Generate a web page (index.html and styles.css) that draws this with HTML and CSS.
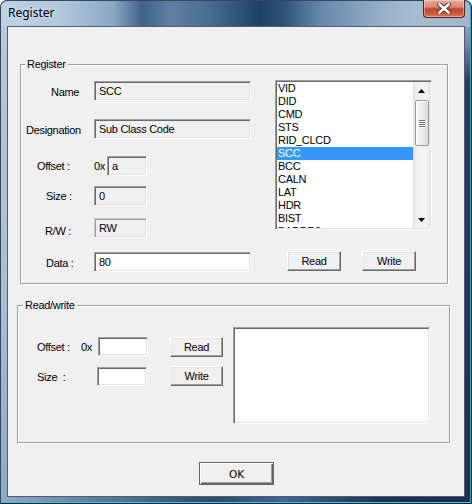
FILE: index.html
```html
<!DOCTYPE html>
<html>
<head>
<meta charset="utf-8">
<link rel="stylesheet" href="styles.css">
</head>
<body>
<div class="window">
  <div class="titlebar">
    <span class="title">Register</span>
    <div class="close">
      <svg width="14" height="11" viewBox="0 0 14 11">
        <path d="M2.5 1.5 L11.5 9.5 M11.5 1.5 L2.5 9.5" stroke="#5a3530" stroke-width="4.6" stroke-linecap="square" fill="none"/>
        <path d="M2.5 1.5 L11.5 9.5 M11.5 1.5 L2.5 9.5" stroke="#ffffff" stroke-width="2.6" stroke-linecap="square" fill="none"/>
      </svg>
    </div>
  </div>
  <div class="client">
    <div class="group group-register">
      <span class="legend">Register</span>
      <div class="reg-left">
        <div class="row r-name"><span class="lbl l-name">Name</span><div class="field w157">SCC</div></div>
        <div class="row r-desig"><span class="lbl l-desig">Designation</span><div class="field w157">Sub Class Code</div></div>
        <div class="row r-off"><span class="lbl l-off">Offset :</span><span class="hex">0x</span><div class="field w40">a</div></div>
        <div class="row r-size"><span class="lbl l-size">Size :</span><div class="field w53">0</div></div>
        <div class="row r-rw"><span class="lbl l-rw">R/W :</span><div class="field flat w53">RW</div></div>
        <div class="row r-data"><span class="lbl l-data">Data :</span><div class="field white w157">80</div></div>
      </div>
      <div class="reg-right">
        <div class="listbox">
          <ul class="items">
            <li>VID</li>
            <li>DID</li>
            <li>CMD</li>
            <li>STS</li>
            <li>RID_CLCD</li>
            <li class="sel">SCC</li>
            <li>BCC</li>
            <li>CALN</li>
            <li>LAT</li>
            <li>HDR</li>
            <li>BIST</li>
            <li>BADDR0</li>
          </ul>
          <div class="vscroll">
            <div class="sb-btn"><svg width="7" height="4" viewBox="0 0 7 4"><polygon points="0,4 3.5,0 7,4" fill="#000"/></svg></div>
            <div class="thumb"><span class="grip"></span><span class="grip"></span><span class="grip"></span><span class="grip"></span></div>
            <div class="track"></div>
            <div class="sb-btn"><svg width="7" height="4" viewBox="0 0 7 4"><polygon points="0,0 7,0 3.5,4" fill="#000"/></svg></div>
          </div>
        </div>
        <div class="btnrow">
          <button class="btn w54">Read</button>
          <button class="btn w54">Write</button>
        </div>
      </div>
    </div>

    <div class="group group-rw">
      <span class="legend">Read/write</span>
      <div class="rw-fields">
        <div class="rw-row"><span class="rw-lbl l-roff">Offset :</span><span class="rw-hex">0x</span><div class="field white w50">&nbsp;</div></div>
        <div class="rw-row"><span class="rw-lbl l-rsize">Size&nbsp;&nbsp;:</span><div class="field white w50">&nbsp;</div></div>
      </div>
      <div class="rw-buttons">
        <button class="btn w53">Read</button>
        <button class="btn w53">Write</button>
      </div>
      <div class="textarea"></div>
    </div>

    <button class="btn ok">OK</button>
  </div>
</div>
</body>
</html>
```

FILE: styles.css
```css
html, body {
  margin: 0;
  padding: 0;
}
body {
  width: 472px;
  height: 504px;
  overflow: hidden;
  font-family: "Liberation Sans", Arial, sans-serif;
  font-size: 11px;
  letter-spacing: -0.3px;
  color: #000;
  background: #fff;
}

.window {
  box-sizing: border-box;
  width: 472px;
  height: 504px;
  border: 1px solid #34485e;
  border-right-color: #0e1c2c;
  border-bottom-color: #0e1c2c;
  border-radius: 7px 7px 0 0;
  display: flex;
  flex-direction: column;
  background:
    linear-gradient(90deg, #bed1e4 0%, #b4c9de 12%, #8ba7c3 24%, #41628a 30%, #5f80a2 36%, #4b6d91 44%, #1f4166 55%, #2e5277 60%, #6688aa 68%, #93adc6 80%, #a6bdd1 88%, #a0b6cc 100%) left top / 100% 26px no-repeat,
    linear-gradient(180deg, #a2b8ce 0, #7090b0 40px, #213f62 80px, #183250 100%) right top / 8px 100% no-repeat,
    linear-gradient(180deg, #b6cadd 0, #a8bed3 60%, #8ea9c4 100%) left top / 8px 100% no-repeat,
    linear-gradient(90deg, #8fa9c3 0%, #5e7fa0 20%, #2b4a6c 45%, #42678c 60%, #1c3656 80%, #152c48 100%) left bottom / 100% 8px no-repeat,
    #5a7896;
  box-shadow: inset 0 -1px 0 #34c6ee, inset -1px 0 0 #2aa6d8;
}

.titlebar {
  height: 25px;
  display: flex;
  justify-content: space-between;
  align-items: flex-start;
  flex: none;
}
.title {
  font-family: "Noto Sans", "Open Sans", sans-serif;
  font-size: 12px;
  letter-spacing: 0;
  line-height: 24px;
  margin-left: 7px;
  color: #000;
  text-shadow: 0 0 6px rgba(255,255,255,0.8);
}
.close {
  box-sizing: border-box;
  width: 42px;
  height: 18px;
  margin-top: -1px;
  margin-right: 6px;
  border: 1px solid #4e2620;
  border-top: none;
  border-radius: 0 0 4px 4px;
  background: linear-gradient(180deg, #e7a898 0%, #d98a77 40%, #c4472f 52%, #cc5a40 80%, #d8785c 100%);
  box-shadow: inset 0 0 0 1px rgba(255,255,255,0.35);
  display: flex;
  align-items: center;
  justify-content: center;
}

.client {
  flex: 1;
  margin: 0 6px 6px 6px;
  border: 1px solid #4c5f74;
  background: #f0f0f0;
  display: flex;
  flex-direction: column;
  align-items: flex-start;
}

.group {
  position: relative;
  box-sizing: border-box;
  border: 1px solid #a0a0a0;
  box-shadow: inset 1px 1px 0 #fff, 1px 1px 0 #fff;
}
.legend {
  position: absolute;
  top: -7px;
  line-height: 13px;
  padding: 0 2px;
  background: #f0f0f0;
}
.group-register .legend { left: 4px; }
.group-rw .legend { left: 5px; }

.group-register {
  margin: 37px 0 0 12px;
  width: 428px;
  height: 220px;
  display: grid;
  grid-template-columns: 230px 157px;
  column-gap: 24px;
  align-items: start;
}

.reg-left {
  display: flex;
  flex-direction: column;
}
.row {
  display: flex;
  align-items: center;
  height: 20px;
}
.r-name { margin-top: 16px; }
.r-desig { margin-top: 18px; }
.r-off { margin-top: 17px; }
.r-size { margin-top: 10px; }
.r-rw { margin-top: 12px; }
.r-data { margin-top: 14px; }

.lbl {
  box-sizing: border-box;
  width: 73px;
  flex: none;
  white-space: nowrap;
}
.l-name { padding-left: 30px; padding-top: 2px; }
.l-desig { padding-left: 5px; padding-top: 1px; }
.l-off { padding-left: 16px; width: 73px; }
.l-size { padding-left: 25px; }
.l-rw { padding-left: 24px; padding-top: 6px; }
.l-data { padding-left: 25px; padding-top: 2px; }
.hex {
  width: 13px;
  flex: none;
}

.field {
  box-sizing: border-box;
  height: 20px;
  border: 1px solid;
  border-color: #a0a0a0 #ffffff #ffffff #a0a0a0;
  box-shadow: inset 1px 1px 0 #696969, inset -1px -1px 0 #e3e3e3;
  padding-left: 4px;
  line-height: 18px;
  background: #f0f0f0;
  white-space: nowrap;
  overflow: hidden;
  flex: none;
}
.field.white { background: #fff; }
.field.flat {
  border-color: #c8c8c8 #ffffff #ffffff #c8c8c8;
  box-shadow: inset 1px 1px 0 #a0a0a0, inset -1px -1px 0 #e3e3e3;
}
.w157 { width: 157px; }
.w40 { width: 40px; }
.w53 { width: 53px; }
.w54 { width: 54px; }
.w50 { width: 50px; }

.reg-right {
  padding-top: 15px;
  display: flex;
  flex-direction: column;
}
.listbox {
  box-sizing: border-box;
  width: 157px;
  height: 150px;
  border: 1px solid;
  border-color: #a0a0a0 #ffffff #ffffff #a0a0a0;
  box-shadow: inset 1px 1px 0 #696969, inset -1px -1px 0 #e3e3e3;
  background: #fff;
  padding: 1px;
  display: flex;
  overflow: hidden;
}
.items {
  list-style: none;
  margin: 0;
  padding: 0;
  flex: 1;
  overflow: hidden;
}
.items li {
  height: 13px;
  line-height: 13px;
  padding-left: 1px;
  white-space: nowrap;
}
.items li.sel {
  background: #3399ff;
  color: #fff;
}
.vscroll {
  width: 17px;
  flex: none;
  display: flex;
  flex-direction: column;
  background: linear-gradient(90deg, #e2e2e2 0, #f2f2f2 25%, #f4f4f4 75%, #e9e9e9 100%);
}
.sb-btn {
  height: 17px;
  flex: none;
  display: flex;
  align-items: center;
  justify-content: center;
}
.thumb {
  box-sizing: border-box;
  height: 46px;
  margin: 1px 1px 0 2px;
  border: 1px solid #979797;
  border-radius: 2px;
  background: linear-gradient(90deg, #f6f6f6 0%, #ececec 50%, #dcdcdc 100%);
  box-shadow: inset 1px 1px 0 #fff;
  display: flex;
  flex-direction: column;
  align-items: center;
  justify-content: center;
  gap: 1px;
}
.grip {
  display: block;
  width: 6px;
  height: 1px;
  background: #6e6e6e;
  box-shadow: 0 1px 0 #fff;
}
.track { flex: 1; }

.btn {
  box-sizing: border-box;
  height: 20px;
  padding: 0;
  margin: 0;
  font-family: "Liberation Sans", Arial, sans-serif;
  font-size: 11px;
  letter-spacing: -0.3px;
  color: #000;
  background: #f0f0f0;
  border: 1px solid;
  border-color: #ffffff #696969 #696969 #ffffff;
  box-shadow: inset -1px -1px 0 #a0a0a0, inset 1px 1px 0 #e3e3e3;
  border-radius: 0;
}
.btnrow {
  display: flex;
  gap: 21px;
  margin-top: 21px;
  padding-left: 12px;
}

.group-rw {
  margin: 21px 0 0 9px;
  width: 433px;
  height: 138px;
  display: flex;
  align-items: flex-start;
}
.rw-fields {
  margin-top: 31px;
  display: flex;
  flex-direction: column;
  gap: 11px;
}
.rw-row {
  display: flex;
  align-items: center;
  height: 19px;
}
.rw-row .field { height: 19px; line-height: 17px; }
.rw-lbl {
  box-sizing: border-box;
  flex: none;
  white-space: nowrap;
  padding-left: 19px;
}
.l-roff { width: 63px; }
.l-rsize { width: 79px; }
.rw-hex { width: 17px; flex: none; }
.rw-buttons {
  margin-top: 31px;
  margin-left: 22px;
  display: flex;
  flex-direction: column;
  gap: 9px;
}
.textarea {
  box-sizing: border-box;
  margin-top: 21px;
  margin-left: 10px;
  width: 197px;
  height: 97px;
  border: 1px solid;
  border-color: #a0a0a0 #ffffff #ffffff #a0a0a0;
  box-shadow: inset 1px 1px 0 #696969, inset -1px -1px 0 #e3e3e3;
  background: #fff;
}

.btn.ok {
  margin: 19px 0 0 191px;
  width: 75px;
  height: 23px;
  font-family: "DejaVu Sans", Tahoma, sans-serif;
  font-size: 10.5px;
  letter-spacing: 0;
  border: 1px solid #646464;
  box-shadow: inset 1px 1px 0 #fff, inset -1px -1px 0 #696969, inset -2px -2px 0 #a0a0a0;
}
```
